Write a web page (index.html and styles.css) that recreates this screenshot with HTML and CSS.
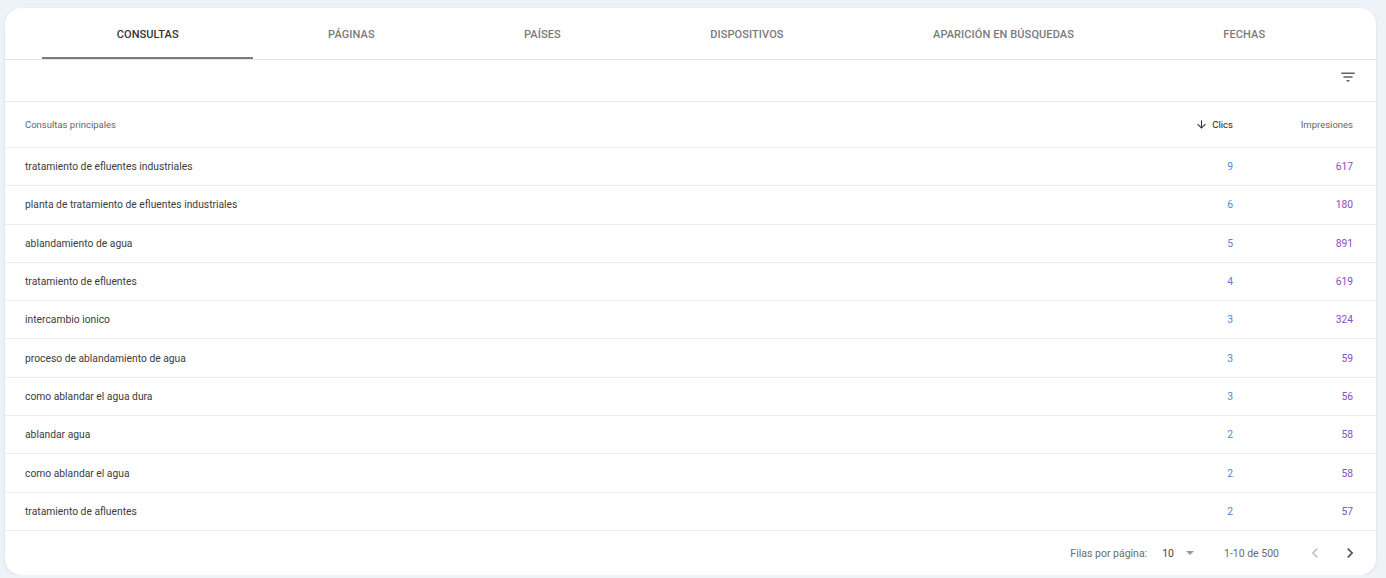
FILE: index.html
```html
<!DOCTYPE html>
<html lang="es">
<head>
<meta charset="utf-8">
<title>Consultas</title>
<link rel="stylesheet" href="styles.css">
</head>
<body>
<div class="card">
  <nav class="tabs">
    <div class="tab active">CONSULTAS</div>
    <div class="tab">PÁGINAS</div>
    <div class="tab">PAÍSES</div>
    <div class="tab">DISPOSITIVOS</div>
    <div class="tab">APARICIÓN EN BÚSQUEDAS</div>
    <div class="tab">FECHAS</div>
  </nav>
  <div class="filterbar">
    <svg class="filter-icon" viewBox="0 0 24 24" width="18" height="18"><path d="M10 18h4v-2h-4v2zM3 6v2h18V6H3zm3 7h12v-2H6v2z" fill="#5f6368"/></svg>
  </div>
  <div class="row head">
    <div class="q">Consultas principales</div>
    <div class="num sorted"><svg class="arrow" viewBox="0 0 24 24" width="13" height="13"><path d="M20 12l-1.41-1.41L13 16.17V4h-2v12.17l-5.58-5.59L4 12l8 8 8-8z" fill="#333"/></svg>Clics</div>
    <div class="num">Impresiones</div>
  </div>
  <div class="row"><div class="q">tratamiento de efluentes industriales</div><div class="num c">9</div><div class="num i">617</div></div>
  <div class="row"><div class="q">planta de tratamiento de efluentes industriales</div><div class="num c">6</div><div class="num i">180</div></div>
  <div class="row"><div class="q">ablandamiento de agua</div><div class="num c">5</div><div class="num i">891</div></div>
  <div class="row"><div class="q">tratamiento de efluentes</div><div class="num c">4</div><div class="num i">619</div></div>
  <div class="row"><div class="q">intercambio ionico</div><div class="num c">3</div><div class="num i">324</div></div>
  <div class="row"><div class="q">proceso de ablandamiento de agua</div><div class="num c">3</div><div class="num i">59</div></div>
  <div class="row"><div class="q">como ablandar el agua dura</div><div class="num c">3</div><div class="num i">56</div></div>
  <div class="row"><div class="q">ablandar agua</div><div class="num c">2</div><div class="num i">58</div></div>
  <div class="row"><div class="q">como ablandar el agua</div><div class="num c">2</div><div class="num i">58</div></div>
  <div class="row"><div class="q">tratamiento de afluentes</div><div class="num c">2</div><div class="num i">57</div></div>
  <div class="footer">
    <span class="label">Filas por página:</span>
    <span class="per">10</span>
    <span class="caret"></span>
    <span class="range">1-10 de 500</span>
    <svg class="chev prev" viewBox="0 0 24 24" width="20" height="20"><path d="M15.41 16.59L10.83 12l4.58-4.59L14 6l-6 6 6 6 1.41-1.41z" fill="#c4c4c4"/></svg>
    <svg class="chev next" viewBox="0 0 24 24" width="20" height="20"><path d="M8.59 16.59L13.17 12 8.59 7.41 10 6l6 6-6 6-1.41-1.41z" fill="#555"/></svg>
  </div>
</div>
</body>
</html>
```

FILE: styles.css
```css
* { box-sizing: border-box; }
html, body { margin: 0; }
body {
  background: #eef2f9;
  padding: 8px 10px 0 5px;
  font-family: Roboto, "Liberation Sans", Arial, sans-serif;
  color: #3c3c3c;
}
.card {
  background: #fff;
  border-radius: 16px;
  height: 567px;
  box-shadow: 0 1px 3px rgba(60, 64, 67, 0.12);
  overflow: hidden;
}
.tabs {
  display: flex;
  height: 52px;
  padding: 0 36px 0 37px;
  border-bottom: 1px solid #e4e4e4;
}
.tab {
  flex: 1 1 auto;
  display: flex;
  align-items: center;
  justify-content: center;
  padding-top: 1px;
  font-size: 11px;
  font-weight: 500;
  color: #7a7a7a;
  letter-spacing: 0.1px;
}
.tab.active {
  color: #333;
  box-shadow: inset 0 -2px 0 #7b7b7b;
}
.filterbar {
  height: 42px;
  border-bottom: 1px solid #e9e9e9;
  display: flex;
  justify-content: flex-end;
  align-items: flex-start;
  padding: 8px 19px 0 0;
}
.filter-icon { display: block; }
.row {
  display: grid;
  grid-template-columns: 1fr 120px 120px;
  align-items: center;
  height: 38.3px;
  padding: 0 23px 0 20px;
  border-bottom: 1px solid #ececec;
  font-size: 10.3px;
}
.row.head {
  height: 46px;
  font-size: 9.5px;
  color: #666;
}
.num { text-align: right; }
.sorted {
  color: #222;
  display: flex;
  justify-content: flex-end;
  align-items: center;
  gap: 4px;
}
.arrow { display: block; }
.c { color: #5187d8; }
.i { color: #8c4cbf; }
.footer {
  display: flex;
  align-items: center;
  justify-content: flex-end;
  height: 45px;
  padding-right: 16px;
  font-size: 10.5px;
  color: #6a6a6a;
}
.per { margin-left: 15px; color: #444; }
.caret {
  margin-left: 12px;
  width: 0;
  height: 0;
  border-left: 4px solid transparent;
  border-right: 4px solid transparent;
  border-top: 4px solid #999;
}
.range { margin-left: 30px; }
.chev { display: block; }
.prev { margin-left: 26px; }
.next { margin-left: 15px; }
```
